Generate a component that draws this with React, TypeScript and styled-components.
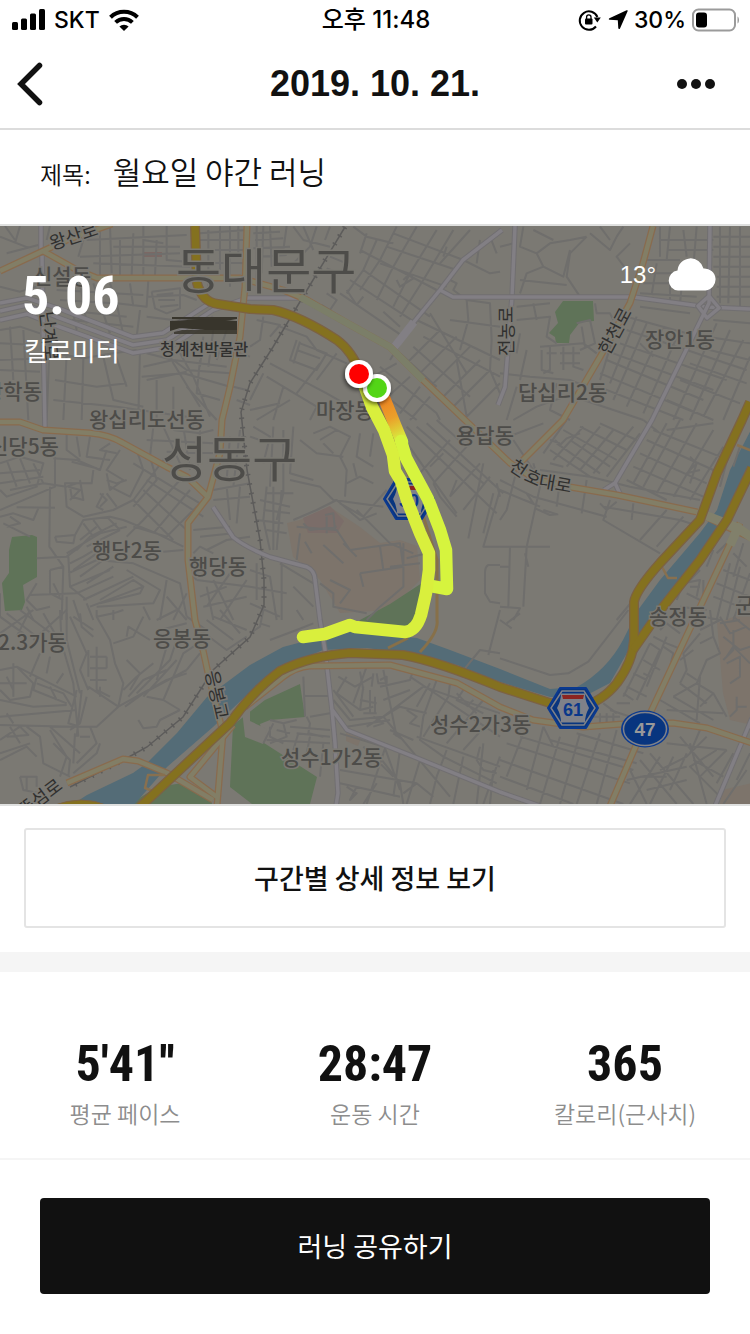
import React from 'react';
import styled, { createGlobalStyle } from 'styled-components';

const GlobalStyle = createGlobalStyle`
  * { box-sizing: border-box; }
  body {
    margin: 0;
    background: #fff;
    color: #111;
    font-family: "Noto Sans CJK KR", sans-serif;
  }
`;

const Screen = styled.main`
  display: flex;
  flex-direction: column;
  min-height: 100vh;
`;

const StatusBar = styled.div`
  display: grid;
  grid-template-columns: 1fr auto 1fr;
  align-items: center;
  height: 40px;
  padding: 0 10px 0 12px;
  color: #000;
  font: 500 23px/40px Inter, "Noto Sans CJK KR", sans-serif;
`;

const Clock = styled.time`
  font-size: 24px;
`;

const StatusGroup = styled.div<{ $end?: boolean }>`
  display: flex;
  align-items: center;
  justify-content: ${(p) => (p.$end ? 'flex-end' : 'flex-start')};
  gap: ${(p) => (p.$end ? 6 : 9)}px;
`;

const Header = styled.header`
  display: grid;
  grid-template-columns: 60px 1fr 60px;
  align-items: center;
  height: 90px;
  padding: 0 16px;
  border-bottom: 2px solid #dcdcdc;
`;

const HeaderTitle = styled.h1`
  margin: 0;
  text-align: center;
  font: 700 36px/48px "Liberation Sans", sans-serif;
`;

const IconButton = styled.button<{ $end?: boolean }>`
  display: flex;
  align-items: center;
  justify-content: ${(p) => (p.$end ? 'flex-end' : 'flex-start')};
  height: 60px;
  padding: 0 ${(p) => (p.$end ? 18 : 0)}px 0 0;
  border: 0;
  background: none;
  color: #111;
  cursor: pointer;

  svg {
    flex: none;
  }
`;

const TitleRow = styled.div`
  display: flex;
  align-items: baseline;
  gap: 22px;
  padding: 17px 40px 26px;
  border-bottom: 2px solid #dfe0df;
`;

const TitleLabel = styled.label`
  font-size: 24px;
  line-height: 48px;
  font-weight: 350;
`;

const TitleInput = styled.input`
  flex: 1;
  min-width: 0;
  height: 48px;
  padding: 0;
  border: 0;
  outline: 0;
  background: none;
  color: #111;
  font: 350 31px/48px "Noto Sans CJK KR", sans-serif;
`;

const MapPanel = styled.section`
  position: relative;
  border-bottom: 2px solid #dfe0df;
`;

const MapDrawing = styled.svg`
  display: block;
  width: 100%;
  height: auto;
  font-family: "Noto Sans CJK KR", sans-serif;
`;

const MapOverlay = styled.div`
  position: absolute;
  inset: 0;
  display: flex;
  align-items: flex-start;
  justify-content: space-between;
  padding: 32px 34px 0 22px;
  color: #fff;
`;

const Figure = styled.strong<{ $size: number }>`
  font: 700 ${(p) => p.$size}px/64px "Roboto Condensed", "Open Sans Condensed", "Liberation Sans", sans-serif;
`;

const Distance = styled.div`
  display: flex;
  flex-direction: column;
  padding-top: 6px;
`;

const DistanceUnit = styled.span`
  padding-left: 2px;
  font-size: 26px;
  line-height: 44px;
`;

const Weather = styled.div`
  display: flex;
  align-items: center;
  gap: 12px;
  font: 400 24px/32px "Liberation Sans", sans-serif;
`;

const DetailSection = styled.section`
  padding: 22px 24px 24px;
  border-bottom: 20px solid #f5f5f5;
`;

const ActionButton = styled.button<{ $dark?: boolean }>`
  display: block;
  width: 100%;
  height: ${(p) => (p.$dark ? 96 : 100)}px;
  padding: 0;
  border: ${(p) => (p.$dark ? '0' : '2px solid #e4e4e4')};
  border-radius: ${(p) => (p.$dark ? 4 : 3)}px;
  background: ${(p) => (p.$dark ? '#111' : '#fff')};
  color: ${(p) => (p.$dark ? '#fff' : '#111')};
  font: ${(p) => (p.$dark ? 400 : 500)} 27px/40px "Noto Sans CJK KR", sans-serif;
  cursor: pointer;
`;

const Stats = styled.dl`
  display: grid;
  grid-template-columns: repeat(3, 1fr);
  margin: 0;
  padding: 60px 0 28px;
  border-bottom: 2px solid #f5f5f5;
`;

const Stat = styled.div`
  display: flex;
  flex-direction: column-reverse;
  align-items: center;
`;

const StatLabel = styled.dt`
  color: #8d8d8d;
  font-size: 23px;
  line-height: 34px;
  font-weight: 350;
`;

const StatValue = styled.dd`
  display: flex;
  margin: 0;
`;

const ShareSection = styled.section`
  padding: 38px 40px 40px;
`;

const SignalIcon = () => (
  <svg width="33" height="22" viewBox="0 0 33 22" aria-hidden="true">
    <rect x="0" y="13" width="6" height="8" rx="1.5" />
    <rect x="9" y="9.500" width="6" height="11.500" rx="1.500" />
    <rect x="18" y="4.500" width="6" height="16.500" rx="1.500" />
    <rect x="27" y="0" width="6" height="21" rx="1.500" />
  </svg>
);

const WifiIcon = () => (
  <svg width="30" height="22" viewBox="0 0 30 22" aria-hidden="true">
    <g fill="none" stroke="#000" strokeWidth="4">
      <path d="M1.500 8.300A19.500 19.500 0 0 1 28.500 8.300" />
      <path d="M6.600 13.400A12.300 12.300 0 0 1 23.400 13.400" />
    </g>
    <path d="M15 22l-4.600-4.400a6.800 6.800 0 0 1 9.200 0z" />
  </svg>
);

const RotationLockIcon = () => (
  <svg width="24" height="22" viewBox="0 0 24 22" aria-hidden="true">
    <path d="M18 17.500A9.200 9.200 0 1 1 19.400 8" fill="none" stroke="#000" strokeWidth="2" />
    <path d="M15.800 8.500h7l-3.500 5z" />
    <rect x="7" y="9.500" width="7.500" height="6" rx="1" />
    <path d="M8.600 10V8a2.200 2.200 0 0 1 4.400 0v2" fill="none" stroke="#000" strokeWidth="1.300" />
  </svg>
);

const LocationIcon = () => (
  <svg width="20" height="20" viewBox="0 0 20 20" aria-hidden="true">
    <path d="M18.600.3c.8-.3 1.300.2 1 1L12 18.400c-.4.900-1.600.8-1.700-.2L9.800 10.200 1.600 9.800C.6 9.700.5 8.600 1.400 8.200z" />
  </svg>
);

const BatteryIcon = () => (
  <svg width="48" height="24" viewBox="0 0 48 24" aria-hidden="true">
    <rect x="1" y="1.500" width="42" height="21" rx="5.500" fill="none" stroke="#9b9b9b" strokeWidth="2" />
    <rect x="4" y="4.500" width="11" height="15" rx="3" />
    <path d="M45.500 8.500c2 1 2 6 0 7z" fill="#9b9b9b" />
  </svg>
);

const BackIcon = () => (
  <svg width="30" height="44" viewBox="0 0 30 44" fill="none" stroke="currentColor" strokeWidth="5.500" strokeLinecap="round">
    <path d="M23.500 3.500L5 22l18.500 18.500" />
  </svg>
);

const MoreIcon = () => (
  <svg width="44" height="12" viewBox="0 0 44 12" fill="currentColor">
    <circle cx="10" cy="6" r="5" />
    <circle cx="24" cy="6" r="5" />
    <circle cx="38" cy="6" r="5" />
  </svg>
);

const CloudIcon = () => (
  <svg width="48" height="33" viewBox="0 0 48 33" fill="#fff" aria-hidden="true">
    <path d="M10 32.500A10 10 0 0 1 9.500 12.600 13.200 13.200 0 0 1 35.500 10.500 11 11 0 0 1 37.500 32.500z" />
  </svg>
);

/* Minor streets, drawn sheet by sheet on a grid three times finer than the map. */
const streetSheets: { x: number; y: number; d: string }[] = [
  {
    x: 0, y: 220,
    d: `M0 50L90 85M15 18L45 60M60 18L45 70M150 18L140 60M20 100L115 75M0 200L60 215L110 200M240 18L250 60L235 110M260 60L560 45M300 30L300 165M330 18L335 160M360 60V165M400 40L395 165M430 18V170M470 60L465 165M500 18V120L560 125M240 110L540 100M280 130L570 140M340 80H540M430 60L490 70
    M600 60H740M610 90H740M625 30V200M660 18V150M690 18V200M715 18V110M600 125L740 130M600 40L740 30M200 185L230 330M240 190L260 310M280 190L330 340M330 190L350 250L440 260L445 180M350 250L370 345M390 190L400 260M420 270L410 350M445 230L550 225L590 240M440 290L520 300M455 215L540 205V265L500 280L465 265L455 215M470 225L520 220M475 240H525M480 260L535 255M170 210L430 225M180 240L340 250M190 270L380 290M215 300L400 320
    M0 330L60 320L120 340M0 370L110 375M30 320L40 480M70 330L85 600M0 420L130 415M0 450L120 455M150 340L140 600M165 400L250 415L340 400L410 390M200 400L190 600M250 415L245 600M165 480L290 500L380 490M310 410L340 540L430 560M345 400L380 500M160 540L350 560L560 590M420 390L415 590M440 400L520 420L680 440M430 440L520 420L560 450L690 460M440 480L560 455M425 470L550 460L690 500M500 380L520 430L600 560M540 400L580 470L630 590M600 420L590 520L660 540M470 480V600M520 500V600M560 500L650 600M610 350L600 440M640 330L625 440M680 330L650 420M700 500L740 510M710 540L750 555M720 400L750 410`,
  },
  {
    x: 250, y: 220,
    d: `M15 60L100 55M20 18V180M40 18L35 160M60 18L65 140M10 40L90 35M10 85L120 80M25 110L110 105M110 18L100 90M130 20L160 60L240 80M160 20L190 90M200 20L180 80L130 130M240 20L225 60M20 300L90 315L60 350M40 290L30 360L0 380M90 320L170 350L200 390L290 430M140 360L120 420L200 450L230 400L150 370M140 390L210 415M150 365L130 430M60 430L230 520L300 560M40 460L0 540M50 470L200 560L180 600M0 570L90 550M100 500L70 600M210 430L140 520M260 400L200 480
    M310 20L350 50L430 70M330 90L560 210M380 60L340 150L290 220M340 150L540 290M300 180L500 310M270 220L460 350M440 20L390 120L330 210M500 20L430 140L380 240M560 30L480 160L430 260M610 30L520 180L450 290M660 30L570 130M430 40L640 120M410 80L620 150M390 130L590 200M350 40L330 100M590 80L580 110M460 180L480 160L490 175L450 200L440 180M230 220L260 240L240 270L215 255M290 210L320 255L340 230M400 275L450 320M240 110L290 130L270 160L230 145
    M500 300L750 420M540 280L650 460M520 350L750 470M490 380L660 530M450 400L560 500M470 340L420 420M570 330L470 430M620 350L500 470M660 380L540 500M690 420L570 540M720 450L600 570M750 490L640 600M600 180L620 190L610 210L650 240L655 300L630 390M640 120L720 160L750 155M650 240L720 250L725 360L720 450L750 520M600 300L750 320M690 60L680 130M720 50L740 100M370 500L500 600M390 440L560 580L570 600M440 430L350 480M480 470L380 560M510 500L450 580M540 530L480 600M620 420L650 590M20 600L120 540`,
  },
  {
    x: 500, y: 220,
    d: `M70 20L60 80L110 100L150 70L210 60L260 50M110 100L130 140L80 160L60 220M130 140L190 170L210 90M60 180L200 195M260 50L210 100L200 170L240 230M100 30L160 60M270 40L330 90L350 50M300 20L330 60M390 70L350 110L380 150M370 20L350 50M450 60L430 100M480 20V110M510 20L500 120M550 30L560 110M590 20L580 140M480 60H640M500 90H640M440 120H540M450 160H540M430 190H560M420 220L590 230M470 130L455 225M510 180V250M545 200L540 250M660 20V250M690 20L685 250M720 20V260M640 50H750M640 80H750M640 110H750M640 140H750M650 170H750M650 200H750M650 230H750
    M0 80L40 70M50 260L150 250M50 300L150 290L140 350L170 370M60 340L50 400M100 250L110 300M230 310L270 300L285 370L240 390M245 320L255 380M285 250L290 280H330L340 300M120 380L250 370L290 400M125 390V450L160 460M150 380V450L130 460M190 380V450M220 380V440L250 450M140 400H170M180 400H240M180 430H240M80 390L60 480M0 460L90 470L210 480L260 500M50 500L20 600M250 510L110 560L40 600M170 490L150 570L210 600
    M340 400L640 510M360 370L680 480M380 330L740 450M380 290L560 340M320 420L610 540M300 460L590 580M270 490L550 600M250 540L430 600M350 320L300 480M410 290L330 490M440 310L340 540M490 320L380 560M540 330L430 580M650 310L520 600M690 330L570 600M730 360L610 590M750 410L670 600M420 370L460 410M420 260L570 280M640 300L750 310M620 350L750 370M590 380L750 420M570 430L740 490M540 480L720 550M500 540L640 600`,
  },
  {
    x: 0, y: 420,
    d: `M0 130L60 110L130 130L110 200L20 230L0 210M20 120L50 200M60 115L90 190M0 160L120 150M100 130L130 190L30 210M0 190L130 170M165 110V200L0 270M130 190L200 200L230 190M160 115L230 120L300 150L320 90M215 125L290 145M200 40V90L240 120M230 50L240 110M270 50L260 110L330 120M330 70L300 90L350 100M360 90L320 150L370 180L330 210L320 160M320 180L350 190L380 180M410 90L430 150L390 230L330 200M420 100L560 180M400 130L600 250M440 180L610 290M430 210L560 330M400 240L520 360M370 300L470 340L550 380M490 120L400 240L340 270L250 290L200 260L195 190H275L280 150M450 110L470 180L400 260M540 180L430 300L380 350M570 210L460 340M600 250L500 350L400 320
    M205 200L240 210L210 240M210 200L215 230L250 240L240 180M300 220L320 240L300 260M320 220L350 260M310 270L290 260L310 220M50 262L165 263M0 290L40 280L100 300L115 265M30 290L60 310L20 320M10 310L90 350M150 200L148 380L190 440L185 600M165 350L225 345L220 370L170 365L165 350M225 345L250 300L330 290L370 300M230 390L270 350L350 310M240 360L290 320M260 380L360 330M200 400L300 340L380 320M250 310L280 350M280 300L310 340M320 290L360 330M110 415L200 410L240 380M205 410L210 500L260 540M210 430L250 410L300 380M220 450L290 400M240 470L310 420M260 490L340 440M205 460L290 420L400 430L540 490L560 590M210 500L330 450M230 520L340 470M250 540L400 470M270 560L430 500M300 550L420 520L430 500L400 480L300 540M290 560L460 550L480 510L380 450M110 490L80 540L110 570L150 560M150 450L190 440M150 450V520L190 540M90 525L230 520M200 530V600M220 540L240 600M160 490L180 530M0 520L0 590M80 560L100 600M260 550L280 600M340 570V600M430 560L450 600M500 480L480 600M490 395L550 390M570 460L590 480M620 390L680 360L750 350M600 350L700 340M580 330L690 320M640 240L750 230M640 210L750 190M680 200L690 300M720 200L710 310M590 480L750 500M600 530L680 500M610 560L740 530M640 480L700 600M620 500L640 600M690 460L620 560M740 480L660 600M500 530L560 600M520 600L560 520
    M460 20L450 110M490 20L540 130M520 30L600 40L640 30M550 20L570 150M600 30L590 180M440 60L640 70M500 95L650 100M690 50L680 180M720 30L700 200M680 120H750M640 400L600 380L580 400`,
  },
  {
    x: 250, y: 420,
    d: `M0 50L30 60M10 20L60 50L40 130M70 20L60 200M100 30V220L80 300M130 20L120 160L190 180M150 60L200 100L280 110M190 40L240 20L300 50L270 110L290 150L285 230M210 60L260 30M220 70L250 100M330 40L320 110L370 140M370 40L360 110M290 190L330 170L370 190M320 170L310 130M50 200L40 300L60 390M50 220H130M30 240L120 260M40 270L120 280M20 300L100 310M50 330L110 340M70 200V390M95 210L80 390M120 180L210 200L250 240L400 260M130 300L200 270L260 240L330 300L380 280M270 250L340 290L410 210M340 290L420 370L490 400M320 270L360 310M140 320L260 330L300 390L370 380L450 370L460 440L330 460M160 310L180 330L260 320M225 285L250 280L255 330M230 290V340M150 340L140 420M165 365L185 400M220 375L280 430M280 370L320 410M390 380L400 450M460 370V500L390 560L350 600M210 490L250 520L250 560L350 580M240 480L300 510L270 550M330 460L340 500M470 415L530 400M420 440L510 430
    M450 40L620 280M470 20L740 280M500 20L700 190M530 10L760 220M560 0L650 80M600 60L500 170M650 80L550 190M690 130L600 230M720 170L640 270M580 100L540 140M620 180L600 230M550 190L570 230L620 290M700 130L655 355M740 190L750 230M750 210L700 380H750M730 220L700 340M750 435H715Q705 440 705 460V520L720 545L750 550M0 450L60 470L80 600M0 500L110 520M20 430V540M95 430V600M130 500L190 560M0 550L90 590M90 430L190 490`,
  },
  {
    x: 500, y: 420,
    d: `M0 60L130 10M40 60L100 150M0 180L100 230L320 290M0 210L120 260M50 150L20 270L0 300M100 130L120 200L80 380L70 560M120 150L270 170L390 200L600 240M150 130L190 140M180 180L170 260M260 180L245 280M330 240L310 300L480 400M400 250L395 300M310 260L540 300L600 320M500 270L420 360M550 290L470 380M580 320L500 410M300 250L320 270L350 245M105 265L150 285L172 283L130 270M60 235L100 250L80 220M0 380H150M30 380L25 560M75 400L85 440M0 440H30M0 560L60 565L40 600M350 600L490 430L600 310
    M130 100L200 0M160 120L250 20M200 140L300 20M240 150L340 30M280 160L400 20M320 170L420 40M190 30L350 120M210 60L330 140M170 70L300 160M240 20L380 90M300 10L410 60M150 90L270 170M460 30L660 110M440 60L640 150M420 100L620 190M400 140L610 230M380 180L500 240M500 10L400 190M540 0L430 200M590 10L470 220M640 30L520 230M670 80L570 240M430 0L480 40M500 30L640 10M570 110L590 130L560 160L600 150M165 60L180 75L200 55L240 40M150 60L180 70M590 130L570 190M700 50L660 200M720 80L700 140
    M700 350L650 400M640 390L620 440M670 450L750 480M650 490L750 530M640 530L720 560M690 430L650 600M720 440L680 600M750 460L700 600M530 540L550 490L600 480L590 530M600 450L540 510M560 520L600 540M610 480V540M540 560L620 570M570 500H600M700 400L740 440M730 370L700 470`,
  },
  {
    x: 0, y: 610,
    d: `M0 20L70 70M20 10L110 80M0 70L100 0M60 0L180 90M100 90L200 0M90 0L50 80M130 10L170 80M180 0L185 100L220 220L235 380M200 10V90L240 250M210 20L260 130L240 180L265 240M220 20L280 60M240 10L245 50L280 80M290 0V20L340 10L370 0M290 20L330 90L345 160L370 220L355 290L265 230M340 100L400 80L430 20M380 80L385 50L450 90M380 150L420 190L390 240M370 240L410 200L460 160M385 260L430 210L500 180M375 290L430 250L560 180M410 250L510 150L540 60M430 260L530 150M470 210L500 110M440 260L490 270L540 300M490 270L550 130L610 90M355 290L500 210L560 190M355 290L290 350L150 350M0 345L220 350M540 300L480 330L470 350L430 355L415 330
    M265 120V200M290 110V240L330 260M270 140H320M270 175H320M290 170V200M320 140V175M270 210H320M300 230V260M0 180L50 170L100 220L90 260L30 270L0 240M40 160V260M0 220H80M20 200L40 240M50 170L110 200L230 260M110 200L100 240L200 280M110 220L190 250L215 290M150 230L170 270M120 130L90 200M150 140L140 190M190 190L170 220M230 240L205 340L240 350M245 240L230 380M260 260L240 340L210 360M0 270L100 290L200 285M0 320L120 310L230 300M20 310L40 340M0 390L60 350L85 375L20 380M30 350L60 400M80 350L120 380L130 460L210 500M150 350L240 430M160 400L210 450L205 500M270 350L290 400L230 460M300 400L290 430L220 490M60 500H110V530M60 500L70 540L120 550M80 500V540M0 450L80 410L110 440M0 430L90 400M180 500L200 440L150 360M225 370L220 460M240 380H270M600 130L560 180M620 30L700 90M640 20L740 60M660 0L720 70M600 60L680 120L740 80M560 20L620 60M470 30L530 0M480 60L560 40`,
  },
  {
    x: 250, y: 610,
    d: `M265 200L315 230L370 200M290 200L260 250L330 300M330 185L340 240M380 190L385 220H410V200L390 210M370 190L365 230M310 280L350 170M340 230L330 300L370 290M330 270L380 280M340 310H380M360 240V310M375 260V310M390 230L480 210L490 180M400 270L480 240M250 240L310 320M250 270L300 330L400 320L520 230M400 320L600 560M400 180L430 330L440 380M350 350L450 290L530 310M370 350L400 340L370 320M470 300L500 320L480 340L510 350M480 200L540 240L750 380M600 220L595 260L520 380M560 210L520 320L510 390L580 440M540 220L500 290M620 250L680 310M640 240L620 270L700 310M650 290L670 270M700 270L590 400M740 310L640 420M520 230L750 310M500 380L750 470M580 440L740 520M590 420L560 500L540 582M640 440L610 582M700 400L680 582M690 410L680 450L700 480L740 490M750 440L700 582M730 480L720 582
    M270 370L400 410M290 350L420 330M400 400L450 540M380 430L450 520L460 582M340 410L430 500M420 360L490 390M430 370L460 390M410 400L350 582M450 420L430 560M510 450L470 582M270 480L500 520M270 520L450 560M290 530L320 550L300 570L320 530M380 520L340 582M460 550L500 520L550 560M60 330L100 340L140 330M60 350V380L100 400M100 340L110 380L60 400M80 360L120 370M50 390L240 400M70 340L40 400M170 320L180 340L175 370L220 380M120 350L240 360M140 370L240 380M160 200L165 320M160 258H240M180 320L240 310M145 370L130 420M180 380L170 430M220 400L210 500M40 0L30 50L0 70M30 40L60 50M60 90L140 60L190 40M140 0L160 30M750 0L715 135M750 130L690 120L645 175`,
  },
  {
    x: 500, y: 610,
    d: `M0 145L150 195L205 190L265 155L385 0M0 30L35 55M20 40L60 10M450 100L480 120M430 150L480 180M400 190L440 210M380 230L440 260M370 250L400 270M350 280H390M330 300L420 330M450 100L370 260M480 120L410 270M500 80L440 230M430 190L450 200M460 80L500 100L550 120M480 60L500 40L540 70M490 110L520 130L510 170M300 310V340M320 310V340M340 310V340M310 280L350 310M280 320H360
    M600 70L550 130L560 180L540 220M540 150L580 120M600 100L640 80L630 0M610 20L660 30L600 60M640 80L660 130L620 150L590 220L520 260M560 190L590 210M590 220L640 250L680 320M520 260L640 330M500 300L670 310M540 220L620 280M640 250L600 290M600 200L590 330M480 270L600 340M660 20L690 70L740 50M670 80L720 120L750 110M700 60V120L670 150M700 20L750 60M680 140L700 110L750 160M680 160L720 140V200L690 220M710 260V300L690 320M710 290H740M660 40L720 30
    M70 370L20 500M130 350L80 540M180 380L120 582M240 370L180 582M300 370L230 582M350 360L290 582M130 350L160 410M20 400L390 520M0 450L370 582M60 380L400 480M150 390L410 460M230 370L430 430M0 500L220 582M420 450L530 582M380 510L560 470M390 480L440 582M450 430L580 582M480 440L390 582M520 440L450 582M560 430L510 540M540 380L640 500M570 400L620 582M620 380L560 440L480 480M650 420L570 470L660 560M680 420L600 500M580 450L670 500M700 430L650 520M500 400L680 420M420 500H500M440 540L560 510M740 480L670 582M750 430L710 510M600 360L570 430`,
  },
];

const railway = 'M345 227L307 290 273 347 250 383 241 412 247 470 260 540 264 580 264 605 250 637 213 670 183 717 147 747 127 758 70 787';

const goldRoads = [
  'M195 226L197 283Q202 302 218 304L250 309L273 310Q300 316 337 340Q352 351 361 374',
  'M140 807L187 763L230 723Q252 692 280 671Q310 656 350 653L403 655Q437 661 500 687L550 703L580 707Q602 702 617 683Q633 661 634 640V602Q636 590 660 563L700 520L717 473L742 420L750 402',
  'M633 650L663 607L700 560L727 520L752 468',
];

const paleRoads = [
  'M0 271L43 251L67 240L112 224',
  'M43 251L77 270L97 278H177L240 278L283 290L307 300L347 323L390 347L423 380L467 422L510 463L535 479L570 487L617 495L697 512L727 527L752 538',
  'M247 226L245 287L240 337L230 387L222 420L220 453L208 497L188 523V560L195 620L203 650L208 673L223 733L217 806',
  'M0 422H20L43 430L90 433Q110 435 123 443L167 467L187 477L208 497',
  'M653 226L643 263L630 303L600 357L563 420L530 453L518 465',
  'M245 707L283 677Q296 667 310 666L390 665L457 683L500 707L533 720L583 727L623 724L673 723L707 728L752 743',
  'M740 523L727 550L702 603L647 720L610 806',
  'M67 783L123 759L138 761L167 773L213 800',
  'M233 725L190 777L217 797',
];

const grayRoads = [
  'M515 226L512 297L505 387L498 405',
  'M393 347L413 323L440 290L463 260L502 230M440 290L453 297H633L707 307L752 309',
  'M710 226L709 303L652 420L615 483L604 490M615 483L620 494M709 296L698 306L707 318L719 308Z',
  'M0 311L27 305L57 317L133 345L167 340L213 310L247 298H303',
  'M0 303L27 298L60 309L133 337L163 333L210 303',
  'M0 320L27 314L57 326L133 353L170 347L214 318',
  'M42 256L43 320L45 430M41 226V250',
  'M213 507L233 537Q245 547 270 557L307 567Q315 571 315 580L320 620L325 650L332 710L335 743L338 793L336 806M331 708L347 730L417 758L500 792L540 806',
  'M752 718L715 806',
];

const districtLabels = [
  { x: 176, y: 289, size: 49, text: '동대문구' },
  { x: 162, y: 477, size: 49, text: '성동구' },
  { x: 33, y: 284, size: 21, text: '신설동' },
  { x: -16, y: 399, size: 21, text: '황학동' },
  { x: -11, y: 454, size: 21, text: '신당5동' },
  { x: 89, y: 427, size: 21, text: '왕십리도선동' },
  { x: 316, y: 418, size: 21, text: '마장동' },
  { x: 456, y: 443, size: 21, text: '용답동' },
  { x: 518, y: 400, size: 21, text: '답십리2동' },
  { x: 645, y: 347, size: 21, text: '장안1동' },
  { x: 92, y: 558, size: 21, text: '행당2동' },
  { x: 189, y: 574, size: 21, text: '행당동' },
  { x: -2, y: 650, size: 21, text: '2.3가동' },
  { x: 153, y: 646, size: 21, text: '응봉동' },
  { x: 649, y: 624, size: 21, text: '송정동' },
  { x: 735, y: 613, size: 21, text: '군자동' },
  { x: 430, y: 732, size: 21, text: '성수2가3동' },
  { x: 281, y: 765, size: 21, text: '성수1가2동' },
];

const roadLabels = [
  { x: 52, y: 250, turn: -18, text: '왕산로' },
  { x: 513, y: 356, turn: -90, text: '전농로' },
  { x: 609, y: 356, turn: -62, text: '한천로' },
  { x: 205, y: 672, turn: 77, text: '응봉교' },
  { x: 24, y: 818, turn: -37, text: '뚝섬로' },
  { x: 40, y: 312, turn: 84, text: '난계로' },
];

const Shield = ({ x, y, text }: { x: number; y: number; text: string }) => (
  <g transform={`translate(${x} ${y})`}>
    <path d="M-13-20H13L25 0 13 20H-13L-25 0z" fill="#08357f" stroke="#0a3990" strokeWidth="2" strokeLinejoin="round" />
    <path d="M-11-17H11L22 0 11 17H-11L-22 0z" fill="#08357f" stroke="#7f8189" strokeWidth="1.500" />
    <path d="M-12-14.500H12Q12-7 16 0 12 7 12 14.500H-12Q-12 7-16 0-12-7-12-14.500z" fill="#7f8189" />
    <path d="M-11-13H11L10-9H-10z" fill="#8b2521" />
    <text y="8" textAnchor="middle" fill="#0a378a" fontSize="18" fontWeight="700" fontFamily="Liberation Sans, sans-serif">{text}</text>
  </g>
);

const Marker = ({ x, y, color }: { x: number; y: number; color: string }) => (
  <g filter="url(#markerShadow)">
    <circle cx={x} cy={y} r="14" fill="#fff" />
    <circle cx={x} cy={y} r="10" fill={color} />
  </g>
);

const RunMap = () => (
  <MapDrawing viewBox="0 226 750 578" role="img" aria-label="러닝 경로 지도">
    <defs>
      <linearGradient id="pace" gradientUnits="userSpaceOnUse" x1="380" y1="395" x2="402" y2="442">
        <stop offset="0" stopColor="#ee7d20" />
        <stop offset="0.500" stopColor="#eba02a" />
        <stop offset="1" stopColor="#d4fa42" />
      </linearGradient>
      <filter id="markerShadow" x="-50%" y="-50%" width="200%" height="200%">
        <feDropShadow dx="-1" dy="2" stdDeviation="2" floodColor="#000" floodOpacity="0.600" />
      </filter>
    </defs>
    <rect y="226" width="750" height="578" fill="#7b7973" />
    <g fill="#7d746b">
      <path d="M287 523L300 520 330 507 360 527 380 543 400 540 417 546 420 580 390 610 340 613 320 580 310 570 293 557z" />
      <path d="M717 623L752 610V725L730 720 723 693z" />
      <path d="M722 790L752 783V804H720z" />
      <path d="M346 733L361 738 358 746 346 741z" />
    </g>
    <path d="M303 518L330 506 344 521 337 533H308z" fill="#7b6d69" />
    <path d="M143 252h19v5h-19z" fill="#7b6864" />
    <g fill="#5f7358">
      <path d="M563 301H593L594 321 580 322 570 335 569 343H556L555 337 549 333 558 323 555 312z" />
      <path d="M12 537L32 535 37 537V577L23 585 25 602 22 610 5 611 2 583 9 573V550z" />
      <path d="M422 583L390 604 360 620 357 625 412 628 425 610z" />
      <path d="M233 725L265 700 300 684 305 717 270 720 260 724 264 743 317 777 310 804H252L230 787z" />
      <path d="M130 804L157 787 183 783 210 798 212 804z" />
    </g>
    <path d="M250 710h-8l3 27 18 7 4-15-17-8z" fill="#7b7973" />
    <path
      fill="#546c77"
      d="M70 806L87 795 133 773 147 763 177 733 207 697 250 665 283 647 317 638 350 632 417 638 450 650 500 669 550 689 577 687Q607 670 623 640L638 610 660 580 700 533 717 510 730 470 752 428V468L733 507 700 553 660 607 627 653 610 683 583 697H550L500 682 457 665 417 655 367 648 323 650 283 667 250 692 213 727 167 767 133 806z"
    />

    <g fill="none" stroke="#6f6e6c" strokeWidth="6" strokeLinejoin="round">
      {streetSheets.map((s) => (
        <path key={`${s.x}-${s.y}`} transform={`translate(${s.x} ${s.y}) scale(.33333)`} d={s.d} />
      ))}
    </g>

    <g fill="none" stroke="#5d5c5b">
      <path strokeWidth="1.500" d={railway} />
      <path strokeWidth="5" strokeDasharray="1.500 8" d={railway} />
    </g>

    <g fill="none" strokeLinejoin="round">
      {grayRoads.map((d) => (
        <g key={d}>
          <path d={d} stroke="#716f71" strokeWidth="5.500" />
          <path d={d} stroke="#827f84" strokeWidth="3.500" />
        </g>
      ))}
      <path d="M414 322L392 350" stroke="#827f84" strokeWidth="8" />
      {paleRoads.map((d) => (
        <path key={d} d={d} stroke="#896b4e" strokeWidth="7" />
      ))}
      {paleRoads.map((d) => (
        <path key={d} d={d} stroke="#827e66" strokeWidth="4.500" />
      ))}
      <path d="M300 297L347 323 390 347 423 380" stroke="#7b7e68" strokeWidth="7" />
      <path d="M697 512L738 528M760 543L738 528 730 545" stroke="#81806b" strokeWidth="9" />
      <path d="M361 374L385 420 415 490 437 560V620Q439 632 420 652M388 648L408 638" stroke="#877049" strokeWidth="3" />
      <path d="M737 445L752 451M661 565L668 578H677M165 775H148L145 788 158 793" stroke="#88704f" strokeWidth="2.500" />
      {goldRoads.map((d) => (
        <path key={d} d={d} stroke="#7c6244" strokeWidth="10" />
      ))}
      {goldRoads.map((d) => (
        <path key={d} d={d} stroke="#84711f" strokeWidth="7.500" />
      ))}
      <path d="M52 806Q83 794 108 806z" fill="#84711f" stroke="#7c6244" />
    </g>

    <g fill="#4d4c49" fontWeight="500" stroke="#7b7973" strokeWidth="3" paintOrder="stroke">
      {districtLabels.map((l) => (
        <text key={l.text} x={l.x} y={l.y} fontSize={l.size} fontWeight={l.size > 40 ? 400 : 500}>{l.text}</text>
      ))}
    </g>
    <g fill="#30302f" fontSize="18" stroke="#7b7973" strokeWidth="3" paintOrder="stroke">
      {roadLabels.map((l) => (
        <text key={l.text} transform={`translate(${l.x} ${l.y}) rotate(${l.turn})`}>{l.text}</text>
      ))}
      <text transform="translate(508 469) rotate(34)">천</text>
      <text transform="translate(523 480) rotate(24)">호</text>
      <text transform="translate(538 487) rotate(10)">대로</text>
      <text x="160" y="355" fontSize="16" fontWeight="500">청계천박물관</text>
    </g>
    <g fill="#38352c">
      <path d="M172 317H237V319L225 321 172 319z" />
      <path d="M170 321L205 319 237 321V330H205L180 328 170 331z" />
      <path d="M174 332L182 330H237V334H174z" opacity="0.850" />
    </g>

    <Shield x={409} y={499} text="30" />
    <Shield x={573} y={708} text="61" />
    <ellipse cx="645" cy="729" rx="24" ry="18.500" fill="#0a3990" />
    <ellipse cx="645" cy="729" rx="21.500" ry="16.500" fill="#08357f" stroke="#7f8189" strokeWidth="1.500" />
    <text x="645" y="736" textAnchor="middle" fill="#999" fontSize="19" fontWeight="700" fontFamily="Liberation Sans, sans-serif">47</text>

    <g fill="none" strokeWidth="12.500" strokeLinecap="round" strokeLinejoin="round">
      <path stroke="url(#pace)" d="M380 388L395 425L402 442" />
      <path stroke="#d6f43e" d="M401 441L406 458L415 475L428 499L440 530L446 550L447 589L431 586" />
      <path stroke="#d9ef3d" d="M361 376L372 407L384 430L393 455L395 471L401 481L407 500L420 533L429 553V570L426 593L421 615Q416 631 405 632L355 627L350 625L325 634L303 637" />
    </g>
    <Marker x={377} y={388} color="#53d517" />
    <Marker x={359} y={374} color="#fe0000" />
  </MapDrawing>
);

const stats = [
  { value: "5'41''", label: '평균 페이스' },
  { value: '28:47', label: '운동 시간' },
  { value: '365', label: '칼로리(근사치)' },
];

export default function App() {
  return (
    <>
      <GlobalStyle />
      <Screen>
        <StatusBar>
          <StatusGroup>
            <SignalIcon />
            <span>SKT</span>
            <WifiIcon />
          </StatusGroup>
          <Clock>오후 11:48</Clock>
          <StatusGroup $end>
            <RotationLockIcon />
            <LocationIcon />
            <span>30%</span>
            <BatteryIcon />
          </StatusGroup>
        </StatusBar>
        <Header>
          <IconButton aria-label="뒤로">
            <BackIcon />
          </IconButton>
          <HeaderTitle>2019. 10. 21.</HeaderTitle>
          <IconButton $end aria-label="더 보기">
            <MoreIcon />
          </IconButton>
        </Header>
        <TitleRow>
          <TitleLabel htmlFor="run-title">제목:</TitleLabel>
          <TitleInput id="run-title" defaultValue="월요일 야간 러닝" />
        </TitleRow>
        <MapPanel>
          <RunMap />
          <MapOverlay>
            <Distance>
              <Figure $size={54}>5.06</Figure>
              <DistanceUnit>킬로미터</DistanceUnit>
            </Distance>
            <Weather>
              <span>13°</span>
              <CloudIcon />
            </Weather>
          </MapOverlay>
        </MapPanel>
        <DetailSection>
          <ActionButton>구간별 상세 정보 보기</ActionButton>
        </DetailSection>
        <Stats>
          {stats.map((s) => (
            <Stat key={s.label}>
              <StatLabel>{s.label}</StatLabel>
              <StatValue>
                <Figure $size={50}>{s.value}</Figure>
              </StatValue>
            </Stat>
          ))}
        </Stats>
        <ShareSection>
          <ActionButton $dark>러닝 공유하기</ActionButton>
        </ShareSection>
      </Screen>
    </>
  );
}
